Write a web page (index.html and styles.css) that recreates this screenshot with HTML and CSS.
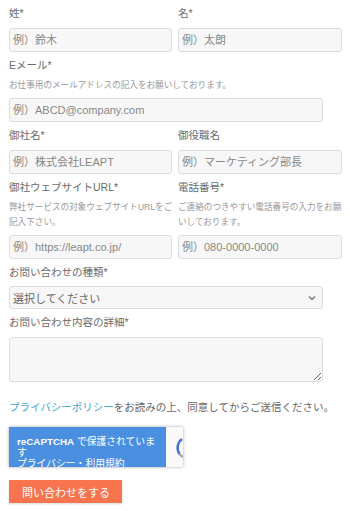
FILE: index.html
```html
<!DOCTYPE html>
<html lang="ja">
<head>
<meta charset="utf-8">
<link rel="stylesheet" href="styles.css">
</head>
<body>
<form class="form">
  <div class="row">
    <div class="field">
      <label class="label">姓*</label>
      <input class="input" type="text" placeholder="例）鈴木">
    </div>
    <div class="field">
      <label class="label">名*</label>
      <input class="input" type="text" placeholder="例）太朗">
    </div>
  </div>
  <div class="field has-note">
    <label class="label">Eメール*</label>
    <p class="note">お仕事用のメールアドレスの記入をお願いしております。</p>
    <input class="input wide" type="text" placeholder="例）ABCD@company.com">
  </div>
  <div class="row">
    <div class="field">
      <label class="label">御社名*</label>
      <input class="input" type="text" placeholder="例）株式会社LEAPT">
    </div>
    <div class="field">
      <label class="label">御役職名</label>
      <input class="input" type="text" placeholder="例）マーケティング部長">
    </div>
  </div>
  <div class="row">
    <div class="field has-note">
      <label class="label">御社ウェブサイトURL*</label>
      <p class="note">弊社サービスの対象ウェブサイトURLをご記入下さい。</p>
      <input class="input" type="text" placeholder="例）https://leapt.co.jp/">
    </div>
    <div class="field has-note">
      <label class="label">電話番号*</label>
      <p class="note">ご連絡のつきやすい電話番号の入力をお願いしております。</p>
      <input class="input" type="text" placeholder="例）080-0000-0000">
    </div>
  </div>
  <div class="field">
    <label class="label">お問い合わせの種類*</label>
    <div class="select wide">
      <span class="select-text">選択してください</span>
      <svg class="chev" width="8" height="6" viewBox="0 0 8 6"><path d="M1 1.5 L4 4.5 L7 1.5" fill="none" stroke="#777" stroke-width="1.3"/></svg>
    </div>
  </div>
  <div class="field">
    <label class="label">お問い合わせ内容の詳細*</label>
    <textarea class="textarea wide"></textarea>
  </div>
  <p class="privacy"><a class="link" href="#">プライバシーポリシー</a>をお読みの上、同意してからご送信ください。</p>
  <div class="recaptcha">
    <div class="rc-blue"><b>reCAPTCHA</b> で保護されています<br>プライバシー・利用規約</div>
    <div class="rc-logo">
      <svg width="17" height="40" viewBox="0 0 17 40">
        <path d="M16 12 A11 11 0 0 0 13.5 27" fill="none" stroke="#4a74c9" stroke-width="2.5"/>
        <path d="M13.5 27 A11 11 0 0 0 17 30" fill="none" stroke="#aaa" stroke-width="2.5"/>
      </svg>
    </div>
  </div>
  <button class="submit" type="button">問い合わせをする</button>
</form>
</body>
</html>
```
FILE: styles.css
```css
* { box-sizing: border-box; }
html, body { margin: 0; padding: 0; background: #fff; }
body {
  font-family: "Liberation Sans", "Noto Sans CJK JP", sans-serif;
  color: #666;
  width: 350px;
  height: 511px;
  overflow: hidden;
}
.form {
  padding: 5px 8px 0 9px;
  display: flex;
  flex-direction: column;
}
.row {
  display: grid;
  grid-template-columns: 163px 164px;
  column-gap: 6px;
}
.field {
  display: flex;
  flex-direction: column;
  align-items: flex-start;
  margin-bottom: 5px;
}
.label {
  display: block;
  font-size: 10.5px;
  line-height: 16px;
  height: 16px;
  margin-bottom: 7px;
  color: #6a6a6a;
  white-space: nowrap;
}
.has-note .label { margin-bottom: 5px; }
.note {
  margin: 0 -7px 5px 0;
  font-size: 8.6px;
  line-height: 15px;
  color: #999;
}
.row .field:first-child .note { margin-right: -8px; }
.input {
  width: 100%;
  height: 24px;
  border: 1px solid #ddd;
  border-radius: 3px;
  background: #f7f7f7;
  padding: 0 3px;
  font-family: inherit;
  font-size: 11px;
  color: #555;
  outline: none;
}
.input::placeholder { color: #888; }
.wide { width: 314px; }
.select {
  height: 23px;
  margin-top: -1px;
  border: 1px solid #ddd;
  border-radius: 3px;
  background: #f7f7f7;
  padding: 0 6px 0 3px;
  display: flex;
  align-items: center;
  justify-content: space-between;
  font-size: 11px;
  color: #666;
}
.textarea {
  height: 45px;
  border: 1px solid #ddd;
  border-radius: 3px;
  background: #f7f7f7;
  resize: vertical;
  outline: none;
  font-family: inherit;
}
.privacy {
  margin: 13px 0 0 0;
  font-size: 10.5px;
  line-height: 14px;
  color: #666;
  white-space: nowrap;
}
.link { color: #43a5d8; text-decoration: none; }
.recaptcha {
  margin-top: 13px;
  width: 174px;
  height: 40px;
  display: flex;
  box-shadow: 0 0 3px rgba(0,0,0,0.35);
  overflow: hidden;
  background: #f9f9f9;
}
.rc-blue {
  width: 157px;
  background: #4a8fe0;
  color: #fff;
  font-size: 9.8px;
  line-height: 11px;
  padding: 9px 8px 0 8px;
  overflow: hidden;
}
.rc-blue b { font-weight: bold; }
.rc-logo { width: 17px; display: flex; }
.submit {
  align-self: flex-start;
  margin-top: 13px;
  width: 113px;
  height: 23px;
  background: #f7744f;
  border: none;
  color: #fff;
  font-family: inherit;
  font-size: 11px;
  text-align: left;
  padding: 0 0 0 13px;
  box-shadow: 0 1px 2px rgba(0,0,0,0.15);
}
```
